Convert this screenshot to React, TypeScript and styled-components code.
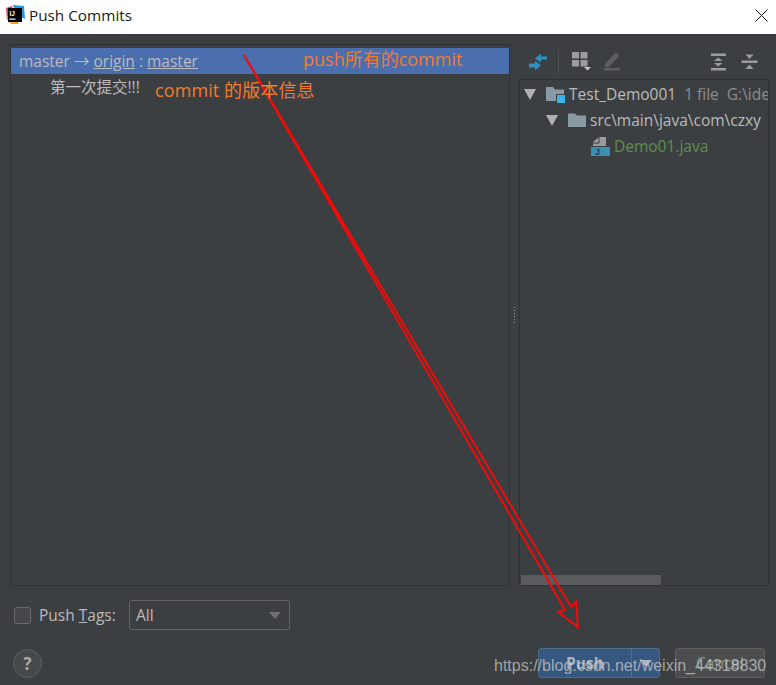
import React from 'react';
import styled, { createGlobalStyle } from 'styled-components';

const GlobalStyle = createGlobalStyle`
  html, body {
    margin: 0;
    padding: 0;
    background: #3c3f41;
  }

  * {
    box-sizing: border-box;
  }
`;

const App: React.FC = () => {
  return (
    <Dialog>
      <GlobalStyle />

      <TitleBar>
        <AppLogo />
        <TitleText>Push Commits</TitleText>
        <CloseIcon />
      </TitleBar>

      <Content>
        <CommitsPanel>
          <BranchRow>
            master → <u>origin</u> : <u>master</u>
          </BranchRow>
          <CommitRow>第一次提交!!!</CommitRow>
        </CommitsPanel>

        <Splitter>
          <SplitterGrip />
        </Splitter>

        <ChangesColumn>
          <Toolbar>
            <CollapseArrowsIcon />
            <ToolbarDivider />
            <GroupIcon />
            <EditIcon />
            <ToolbarSpacer />
            <ExpandAllIcon />
            <CollapseAllIcon />
          </Toolbar>

          <TreePanel>
            <TreeRow level={0}>
              <Caret />
              <ModuleFolderIcon />
              <TreeLabel>Test_Demo001</TreeLabel>
              <TreeHint>1 file</TreeHint>
              <TreeHint>G:\idea\workspace</TreeHint>
            </TreeRow>
            <TreeRow level={1}>
              <Caret />
              <FolderIcon />
              <TreeLabel>src\main\java\com\czxy</TreeLabel>
            </TreeRow>
            <TreeRow level={2}>
              <JavaFileIcon />
              <FileLabel>Demo01.java</FileLabel>
            </TreeRow>
            <TreeScrollbar />
          </TreePanel>
        </ChangesColumn>
      </Content>

      <OptionsRow>
        <Checkbox />
        <OptionLabel>
          Push <u>T</u>ags:
        </OptionLabel>
        <SelectBox>
          All
          <SelectArrow />
        </SelectBox>
      </OptionsRow>

      <Footer>
        <HelpButton>?</HelpButton>
        <FooterSpacer />
        <PushButton>
          <PushLabel>Push</PushLabel>
          <PushArrow>
            <SelectArrow light />
          </PushArrow>
        </PushButton>
        <CancelButton>Cancel</CancelButton>
      </Footer>

      <RedArrow />
      <PushNote>push所有的commit</PushNote>
      <CommitNote>commit 的版本信息</CommitNote>
      <Watermark>https://blog.csdn.net/weixin_44318830</Watermark>
    </Dialog>
  );
};

const AppLogo = () => (
  <LogoSvg viewBox="0 0 20 20">
    <path d="M1 3 L7 1 L10 8 L2 15 Z" fill="#f0397c" />
    <path d="M8 0 L19 1 L20 14 L12 10 Z" fill="#1f9be0" />
    <path d="M1 11 L6 19 L14 19 L10 10 Z" fill="#f6a01c" />
    <rect x="3" y="3" width="14" height="14" fill="#000" />
    <text x="4.5" y="10.5" fontSize="6.5" fontWeight="700" fontFamily="'Liberation Sans', sans-serif" fill="#fff">IJ</text>
    <rect x="4.5" y="13.5" width="6" height="1.2" fill="#fff" />
  </LogoSvg>
);

const CloseIcon = () => (
  <CloseSvg viewBox="0 0 13 13">
    <path d="M0.5 0.5 L12.5 12.5 M12.5 0.5 L0.5 12.5" stroke="#111" strokeWidth="1" fill="none" />
  </CloseSvg>
);

const CollapseArrowsIcon = () => (
  <IconSvg size={20} viewBox="0 0 20 20">
    <path d="M18 4.5 H12 V1.5 L6 6.5 L12 10.5 V7.5 H18 Z" fill="#2f8fc4" />
    <path d="M0 11.5 H6 V9 L12 13.5 L6 18.5 V15.5 H0 Z" fill="#2f8fc4" />
  </IconSvg>
);

const GroupIcon = () => (
  <IconSvg size={20} viewBox="0 0 20 20">
    <rect x="0" y="0" width="7" height="6.5" fill="#9a9c9e" />
    <rect x="8.5" y="0" width="7" height="6.5" fill="#9a9c9e" />
    <rect x="0" y="8" width="7" height="6.5" fill="#9a9c9e" />
    <rect x="8.5" y="8" width="7" height="6.5" fill="#9a9c9e" />
    <path d="M12 15 H19 L15.5 18.5 Z" fill="#c4c6c8" />
  </IconSvg>
);

const EditIcon = () => (
  <IconSvg size={20} viewBox="2 0 20 20">
    <path d="M3 12 L12 2 L14 1 L17 3 L16 5 L7 15 L3 15 Z" fill="#5c5e60" />
    <rect x="0.5" y="16" width="17.5" height="2.5" fill="#5c5e60" />
  </IconSvg>
);

const ExpandAllIcon = () => (
  <IconSvg size={18} viewBox="1.5 0 18 18">
    <rect x="1" y="0.5" width="15.5" height="2.5" fill="#9a9c9e" />
    <path d="M8.75 4.5 L13 8 H4.5 Z M8.75 13.5 L4.5 10 H13 Z" fill="#9a9c9e" />
    <rect x="1" y="15" width="15.5" height="2.5" fill="#9a9c9e" />
  </IconSvg>
);

const CollapseAllIcon = () => (
  <IconSvg size={18} viewBox="0 0 18 18">
    <path d="M4.5 1.5 H12.5 L8.5 6 Z" fill="#9a9c9e" />
    <rect x="0.5" y="7.5" width="16" height="2.5" fill="#9a9c9e" />
    <path d="M8.5 11.5 L12.5 16 H4.5 Z" fill="#9a9c9e" />
  </IconSvg>
);

const ModuleFolderIcon = () => (
  <FolderSvg width="19" height="17" viewBox="0 0 19 17">
    <path d="M0 1 H7 L9 3.5 H18 V15 H0 Z" fill="#8a9aa5" />
    <rect x="10" y="8" width="9" height="9" fill="#3c3f41" />
    <rect x="11" y="9" width="8" height="8" fill="#3cb4e8" />
  </FolderSvg>
);

const FolderIcon = () => (
  <FolderSvg width="18" height="14" viewBox="0 0 18 14">
    <path d="M0 0.5 H7 L9 2.5 H18 V14 H0 Z" fill="#8a9aa5" />
  </FolderSvg>
);

const JavaFileIcon = () => (
  <FolderSvg width="19" height="19" viewBox="0 0 19 19">
    <path d="M2 5 L8 0 H15 V9 H2 Z" fill="#9a9c9e" />
    <path d="M2 6 H8 V0" fill="none" stroke="#3c3f41" strokeWidth="1" />
    <rect x="0" y="10" width="19" height="9" fill="#3b8fb0" />
    <text x="4" y="18" fontSize="9" fontWeight="700" fontFamily="'Liberation Sans', sans-serif" fill="#23384a">J</text>
  </FolderSvg>
);

const RedArrow = () => (
  <ArrowSvg viewBox="0 0 776 685">
    <path
      d="M244 55 L565 610 L558 612 L578 627 L576 602 L571 607 Z"
      fill="none"
      stroke="#f50a0a"
      strokeWidth="2"
    />
  </ArrowSvg>
);

const Dialog = styled.div`
  position: relative;
  width: 776px;
  height: 685px;
  overflow: hidden;
  background: #3c3f41;
  font-family: "Open Sans", "Noto Sans CJK SC", sans-serif;
`;

const TitleBar = styled.div`
  display: flex;
  align-items: center;
  height: 34px;
  padding: 0 8px 4px 5px;
  background: #fff;
`;

const LogoSvg = styled.svg`
  width: 20px;
  height: 20px;
  margin-right: 4px;
`;

const TitleText = styled.div`
  flex: 1;
  font-size: 15.3px;
  color: #1a1a1a;
`;

const CloseSvg = styled.svg`
  width: 13px;
  height: 13px;
`;

const Content = styled.div`
  display: flex;
  height: 552px;
  padding: 10px 7px 0 10px;
`;

const CommitsPanel = styled.div`
  width: 500px;
  height: 542px;
  padding-top: 3px;
  border: 1px solid #2f3133;
`;

const BranchRow = styled.div`
  height: 26px;
  padding-left: 8px;
  background: #4b6eaf;
  font-size: 15.5px;
  line-height: 27px;
  color: #bbbbbb;
`;

const CommitRow = styled.div`
  height: 26px;
  padding-left: 39px;
  font-size: 15.5px;
  line-height: 26px;
  color: #bbbbbb;
`;

const Splitter = styled.div`
  display: flex;
  align-items: center;
  justify-content: center;
  width: 9px;
  height: 542px;
`;

const SplitterGrip = styled.div`
  width: 4px;
  height: 18px;
  background-image: radial-gradient(#9a9c9e 1px, transparent 1px);
  background-size: 3px 3px;
`;

const ChangesColumn = styled.div`
  display: flex;
  flex-direction: column;
  width: 250px;
  height: 542px;
`;

const Toolbar = styled.div`
  display: flex;
  align-items: center;
  flex-shrink: 0;
  height: 35px;
  padding: 0 10px 0 10px;

  & > svg + svg {
    margin-left: 12px;
  }
`;

const IconSvg = styled.svg<{ size: number }>`
  flex-shrink: 0;
  width: ${({ size }) => size}px;
  height: ${({ size }) => size}px;
`;

const ToolbarDivider = styled.div`
  flex-shrink: 0;
  width: 1px;
  height: 24px;
  margin: 0 13px 0 9px;
  background: #4f5153;
`;

const ToolbarSpacer = styled.div`
  flex: 1;
`;

const TreePanel = styled.div`
  position: relative;
  flex: 1;
  padding-top: 1px;
  border: 1px solid #2f3133;
  overflow: hidden;
`;

const TreeRow = styled.div<{ level: number }>`
  display: flex;
  align-items: center;
  gap: 4px;
  height: 26px;
  padding-left: ${({ level }) => (level === 2 ? 71 : 4 + level * 22)}px;
  font-size: 15.5px;
  white-space: nowrap;
`;

const Caret = styled.span`
  flex-shrink: 0;
  width: 0;
  height: 0;
  margin-right: 6px;
  border-left: 6px solid transparent;
  border-right: 6px solid transparent;
  border-top: 11px solid #afb1b3;
`;

const FolderSvg = styled.svg`
  flex-shrink: 0;
`;

const TreeLabel = styled.span`
  color: #bbbbbb;
`;

const TreeHint = styled.span`
  margin-left: 4px;
  color: #8c8c8c;
`;

const FileLabel = styled.span`
  color: #5c8f4a;
`;

const TreeScrollbar = styled.div`
  position: absolute;
  left: 1px;
  bottom: 0;
  width: 140px;
  height: 10px;
  background: #595b5d;
`;

const OptionsRow = styled.div`
  display: flex;
  align-items: center;
  height: 30px;
  margin-top: 14px;
  padding-left: 14px;
`;

const Checkbox = styled.div`
  width: 17px;
  height: 17px;
  border: 1px solid #6b6b6b;
  border-radius: 3px;
  background: #43474a;
`;

const OptionLabel = styled.div`
  width: 90px;
  margin-left: 8px;
  font-size: 15.5px;
  color: #bbbbbb;
`;

const SelectBox = styled.div`
  display: flex;
  align-items: center;
  justify-content: space-between;
  width: 161px;
  height: 30px;
  padding: 0 8px 0 6px;
  border: 1px solid #646464;
  border-radius: 3px;
  font-size: 15.5px;
  color: #bbbbbb;
`;

const SelectArrow = styled.span<{ light?: boolean }>`
  width: 0;
  height: 0;
  border-left: 6px solid transparent;
  border-right: 6px solid transparent;
  border-top: 7px solid ${({ light }) => (light ? '#a9b4c2' : '#6e7072')};
`;

const Footer = styled.div`
  display: flex;
  align-items: center;
  height: 30px;
  margin-top: 18px;
  padding: 0 11px 0 13px;
`;

const HelpButton = styled.div`
  display: flex;
  align-items: center;
  justify-content: center;
  width: 29px;
  height: 29px;
  border: 1px solid #5e6060;
  border-radius: 50%;
  background: #46494b;
  font-size: 17px;
  font-weight: 700;
  color: #a9abad;
`;

const FooterSpacer = styled.div`
  flex: 1;
`;

const PushButton = styled.div`
  display: flex;
  width: 122px;
  height: 30px;
  margin-right: 15px;
  border: 1px solid #4c708c;
  border-radius: 3px;
  background: #365880;
  font-size: 15.5px;
  font-weight: 700;
  color: #a9b4c2;
`;

const PushLabel = styled.div`
  display: flex;
  align-items: center;
  justify-content: center;
  flex: 1;
`;

const PushArrow = styled.div`
  display: flex;
  align-items: center;
  justify-content: center;
  width: 28px;
  border-left: 1px solid #4c708c;
`;

const CancelButton = styled.div`
  display: flex;
  align-items: center;
  justify-content: center;
  width: 90px;
  height: 30px;
  border: 1px solid #5e6060;
  border-radius: 3px;
  background: #4b4d4f;
  font-size: 15.5px;
  color: #8f9193;
`;

const ArrowSvg = styled.svg`
  position: absolute;
  top: 0;
  left: 0;
  width: 776px;
  height: 685px;
  pointer-events: none;
`;

const PushNote = styled.div`
  position: absolute;
  top: 47px;
  left: 303px;
  font-size: 18px;
  line-height: 25px;
  color: #f47a2a;
`;

const CommitNote = styled.div`
  position: absolute;
  top: 78px;
  left: 155px;
  font-size: 18px;
  letter-spacing: 0.1px;
  line-height: 25px;
  color: #f47a2a;
`;

const Watermark = styled.div`
  position: absolute;
  top: 656px;
  left: 494px;
  font-family: "Liberation Sans", sans-serif;
  font-size: 16px;
  line-height: 20px;
  white-space: nowrap;
  color: rgba(205, 205, 205, 0.72);
`;

export default App;
